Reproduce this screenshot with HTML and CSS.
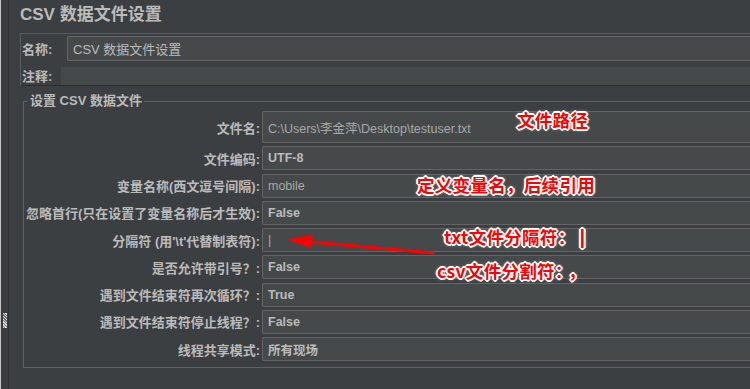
FILE: index.html
```html
<!DOCTYPE html>
<html lang="zh-CN">
<head>
    <meta charset="UTF-8">
    <meta name="viewport" content="width=device-width, initial-scale=1.0">
    <title>CSV 数据文件设置</title>
    <link rel="stylesheet" href="styles.css">
</head>
<body>
    <div class="frame">
        <div class="splitter"><span class="grip"></span></div>

        <div class="main">
            <h1 class="title">CSV 数据文件设置</h1>

            <div class="name-panel">
                <div class="name-row">
                    <label class="name-label">名称:</label>
                    <div class="field field-name">CSV 数据文件设置</div>
                </div>
                <div class="name-row">
                    <label class="comment-label">注释:</label>
                    <div class="field field-comment"></div>
                </div>
            </div>

            <fieldset class="group">
                <legend>设置 CSV 数据文件</legend>
                <div class="form-grid">
                    <label>文件名:</label>
                    <div class="field tall plain">C:\Users\李金萍\Desktop\testuser.txt</div>

                    <label>文件编码:</label>
                    <div class="field">UTF-8</div>

                    <label>变量名称(西文逗号间隔):</label>
                    <div class="field plain">mobile</div>

                    <label>忽略首行(只在设置了变量名称后才生效):</label>
                    <div class="field">False</div>

                    <label>分隔符 (用'\t'代替制表符):</label>
                    <div class="field plain">|</div>

                    <label>是否允许带引号？:</label>
                    <div class="field">False</div>

                    <label>遇到文件结束符再次循环？:</label>
                    <div class="field">True</div>

                    <label>遇到文件结束符停止线程？:</label>
                    <div class="field">False</div>

                    <label>线程共享模式:</label>
                    <div class="field">所有现场</div>
                </div>
            </fieldset>
        </div>

        <!-- 标注 -->
        <div class="note note-path">文件路径</div>
        <div class="note note-var">定义变量名，后续引用</div>
        <div class="note note-txt">txt文件分隔符：<span class="bar">|</span></div>
        <div class="note note-csv">csv文件分割符：<span class="comma">，</span></div>

        <svg class="arrow" width="750" height="389" viewBox="0 0 750 389">
            <line x1="433" y1="253" x2="306" y2="241.5" stroke="#ff0000" stroke-width="3" stroke-linecap="round"/>
            <polygon points="287,239.5 313,234.5 311,248" fill="#ff0000"/>
        </svg>
    </div>
</body>
</html>
```

FILE: styles.css
```css
* {
    margin: 0;
    padding: 0;
    box-sizing: border-box;
}

body {
    background-color: #3c3f41;
    color: #bbbbbb;
    font-family: "Liberation Sans", "Noto Sans CJK SC", sans-serif;
    font-size: 13px;
    overflow: hidden;
}

.frame {
    position: relative;
    display: flex;
    width: 750px;
    height: 389px;
}

/* 左侧分隔条 */
.splitter {
    width: 9px;
    flex-shrink: 0;
    border-left: 1px solid #c4c4c4;
    border-right: 1px solid #2e3032;
    background-color: #3a3d3f;
}

.grip {
    display: block;
    width: 4px;
    height: 15px;
    margin: 313px 0 0 2px;
    background: repeating-linear-gradient(45deg, #e0e0e0 0 1px, #6a6a6a 1px 2px);
}

.main {
    flex: 1;
    min-width: 0;
    padding-left: 11px;
}

.title {
    height: 33px;
    padding-top: 5px;
    font-size: 17px;
    line-height: 20px;
    font-weight: bold;
    color: #bbbbbb;
}

/* 通用输入框 */
.field {
    display: flex;
    align-items: center;
    height: 24px;
    padding-left: 5px;
    background-color: #45494a;
    border: 1px solid #646464;
    border-right: none;
    border-radius: 2px 0 0 2px;
    font-size: 12.5px;
    font-weight: bold;
    color: #bbbbbb;
    white-space: nowrap;
    overflow: hidden;
}

.field.tall {
    height: 32px;
}

.field.plain {
    font-weight: normal;
    color: #a8a8a8;
}

/* 名称 / 注释 */
.name-panel {
    border: 1px solid #5a5d5f;
    border-right: none;
    border-bottom-color: #2b2d2e;
    padding: 2px 0 0 1px;
}

.name-row {
    display: flex;
    align-items: center;
}

.name-row + .name-row {
    margin-top: 5px;
}

.name-row label {
    font-weight: bold;
}

.name-label {
    width: 45px;
}

.comment-label {
    width: 39px;
}

.name-row .field-name {
    flex: 1;
    height: 25px;
    font-size: 13px;
    font-weight: normal;
    padding-left: 5px;
}

.name-row .field-comment {
    flex: 1;
    height: 18px;
    border: none;
    border-radius: 0;
}

/* 设置 CSV 数据文件 */
.group {
    margin: 7px 0 0 3px;
    border: 1px solid #5e6163;
    border-right: none;
    padding: 2px 0 6px 0;
}

.group legend {
    margin-left: 4px;
    padding: 0 2px;
    font-weight: bold;
    line-height: 16px;
    color: #bbbbbb;
}

.form-grid {
    display: grid;
    grid-template-columns: 236px 1fr;
    column-gap: 2px;
    row-gap: 3.25px;
}

.form-grid label {
    text-align: right;
    font-weight: bold;
    align-self: center;
    white-space: nowrap;
}

/* 红色标注 */
.note {
    position: absolute;
    font-family: "Noto Sans CJK SC", sans-serif;
    font-size: 17.5px;
    font-weight: bold;
    line-height: 20px;
    letter-spacing: 0.3px;
    color: #ff0000;
    white-space: nowrap;
    text-shadow:
        -1px -1px 0 #fff, 1px -1px 0 #fff, -1px 1px 0 #fff, 1px 1px 0 #fff,
        0 -2px 0 #fff, 0 2px 0 #fff, -2px 0 0 #fff, 2px 0 0 #fff,
        0 0 4px rgba(255, 255, 255, 0.8);
}

.note-path {
    left: 517px;
    top: 110px;
}

.note-var {
    left: 417px;
    top: 175px;
}

.note-txt {
    left: 444px;
    top: 227px;
}

.note-txt .bar {
    font-family: "Liberation Sans", sans-serif;
    margin-left: 4px;
    font-size: 20px;
}

.note-csv {
    left: 437px;
    top: 261px;
}

.note-csv .comma {
    margin-left: 4px;
}

.arrow {
    position: absolute;
    left: 0;
    top: 0;
    pointer-events: none;
}
```
